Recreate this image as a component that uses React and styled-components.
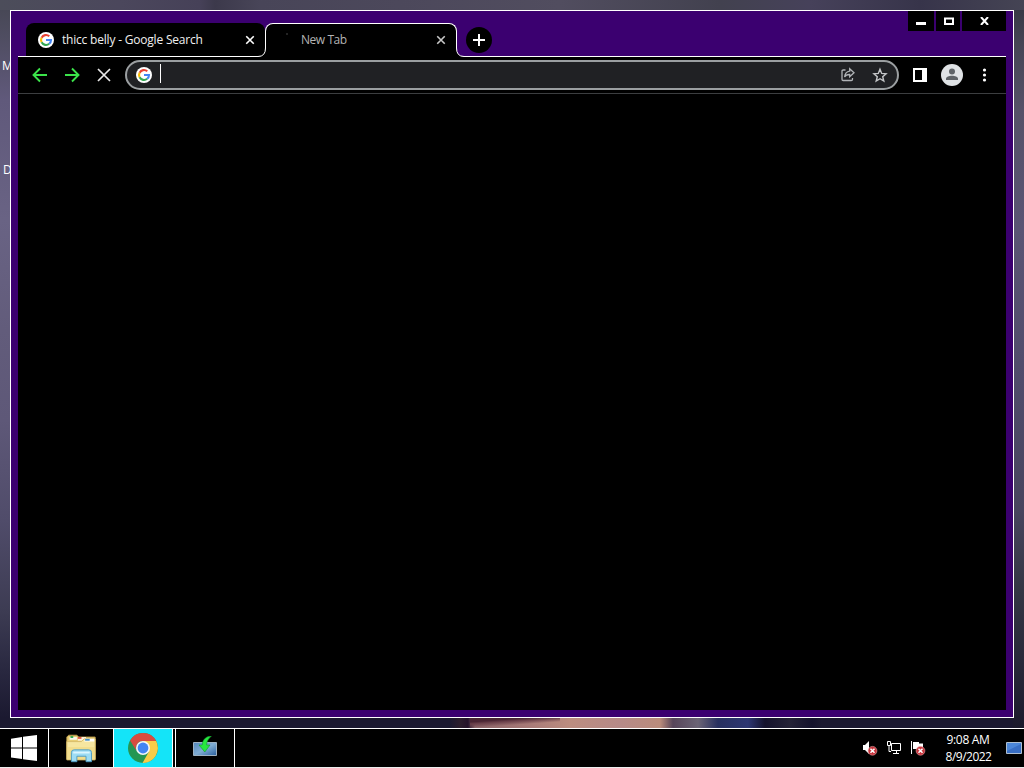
import React from 'react'
import styled, { createGlobalStyle } from 'styled-components'

const GlobalStyle = createGlobalStyle`
  * { box-sizing: border-box; }
  body { margin: 0; background: #000; overflow: hidden; }
  svg { display: block; flex: none; }
`

const white = '#fff'
const purple = '#3b0070'

const Screen = styled.div`
  position: relative;
  width: 1024px;
  height: 768px;
  display: flex;
  flex-direction: column;
  overflow: hidden;
  font-family: 'Open Sans', 'Noto Sans', sans-serif;
  font-size: 12px;
  color: ${white};
`

const Desktop = styled.div`
  height: 728px;
  padding: 10px;
  background:
    linear-gradient(176deg, #4a2634 4px, #6b414b 6px, transparent 10px) 470px 718px / 90px 10px no-repeat,
    linear-gradient(90deg, transparent 450px, #2b1d2c 460px, #24122a 468px, #8a6468 475px, #a87b78 530px, #bc8d80 570px, #b68a88 620px, #ba8c7c 660px, #57455a 673px, #6b6475 698px, #28305f 718px, #2d3672 748px, #14122c 765px, #242236 790px, #14122c 812px, transparent 822px) 0 718px / 1024px 10px no-repeat,
    linear-gradient(90deg, #4c4d5a, #4b475c 120px, #464158 200px, #3c394b 215px, #484558 260px, #4c485b 400px, #514d5f 560px, #42414f 720px, #46415a 810px, #37344a 920px, #454454 1024px) 0 0 / 1024px 10px no-repeat,
    linear-gradient(#454652, #60597b 100px, #696384 220px, #625c7b 330px, #5e5878 420px, #504c6a 520px, #3d3c53 610px, #292840 670px, #1b1930 718px, #1b1a30) 0 0 / 11px 728px no-repeat,
    linear-gradient(#343642, #464555 45px, #555168 110px, #5a5474 230px, #504b6b 380px, #48445e 510px, #343644 590px, #29293a 660px, #1b1a2c 728px) right 0 / 11px 728px no-repeat,
    #1b1930;
`

const DesktopLabel = styled.span`
  position: absolute;
  left: ${({ $x }) => $x}px;
  top: ${({ $y }) => $y}px;
  line-height: 16px;
`

const Window = styled.div`
  position: relative;
  width: 1004px;
  height: 708px;
  padding: 0 7px 7px;
  display: flex;
  flex-direction: column;
  border: 1px solid ${white};
  background: ${purple};
`

const TitleBar = styled.div`
  height: 46px;
  display: flex;
  align-items: flex-end;
  background: linear-gradient(${white}, ${white}) 0 45px / 100% 1px no-repeat;
`

const Tab = styled.div`
  position: relative;
  height: ${({ $active }) => $active ? 34 : 33}px;
  width: ${({ $active }) => $active ? 192 : 239}px;
  margin-left: ${({ $active }) => $active ? 0 : 8}px;
  margin-bottom: ${({ $active }) => $active ? 0 : 1}px;
  padding: ${({ $active }) => $active ? '0 10px 2px 35px' : '0 10px 0 12px'};
  display: flex;
  align-items: center;
  gap: 8px;
  border: ${({ $active }) => $active ? `1px solid ${white}` : 'none'};
  border-bottom: none;
  border-radius: 8px 8px 0 0;
  background: #000;
  color: ${({ $active }) => $active ? '#b4b4b4' : '#f0f0f0'};
`

const TabTitle = styled.span`
  flex: 1;
  white-space: nowrap;
  letter-spacing: ${({ $spacing }) => $spacing || 0}px;
`

const Foot = styled.svg`
  position: absolute;
  bottom: 0;
  ${({ $side }) => $side}: -8px;
`

const Throbber = styled.i`
  position: absolute;
  left: 20px;
  top: 9px;
  width: 2px;
  height: 2px;
  background: #242424;
`

const NewTabButton = styled.button`
  width: 26px;
  height: 26px;
  margin: 0 0 4px 9px;
  padding: 0;
  display: grid;
  place-items: center;
  border: none;
  border-radius: 50%;
  background: #000;
`

const Controls = styled.div`
  height: 20px;
  margin-left: auto;
  align-self: flex-start;
  display: flex;
  gap: 2px;
`

const ControlButton = styled.button`
  width: ${({ $width }) => $width}px;
  height: 20px;
  padding: ${({ $nudge }) => $nudge ? '0 0 0 2px' : 0};
  display: grid;
  place-items: center;
  border: none;
  background: #000;
`

const Toolbar = styled.div`
  height: 37px;
  padding: 0 13px 0 14px;
  display: flex;
  align-items: center;
  border-bottom: 1px solid #3c3e40;
  background: #000;
`

const NavIcons = styled.div`
  width: 93px;
  display: flex;
  gap: 16px;
`

const AddressBar = styled.div`
  width: 774px;
  height: 30px;
  padding: 0 9px;
  display: flex;
  align-items: center;
  border: 2px solid #9b9fa1;
  border-radius: 15px;
  background: #202124;
`

const Caret = styled.i`
  width: 1px;
  height: 19px;
  margin: -3px auto 0 8px;
  background: ${white};
`

const BarActions = styled.div`
  display: flex;
  gap: 16px;
`

const BrowserActions = styled.div`
  margin-left: 13px;
  display: flex;
  align-items: center;
`

const Avatar = styled.div`
  margin: 0 15px 0 13px;
`

const Page = styled.div`
  flex: 1;
  background: #000;
`

const Taskbar = styled.div`
  height: 40px;
  display: flex;
  border-top: 1px solid ${white};
  border-bottom: 1px solid #ececec;
  background: #000;
`

const TaskButton = styled.div`
  width: ${({ $width }) => $width}px;
  display: grid;
  place-items: center;
  border-right: 1px solid ${white};
  background: ${({ $active }) => $active ? '#14e4f8' : '#000'};
`

const Tray = styled.div`
  margin-left: auto;
  display: flex;
  align-items: center;
`

const TrayIcons = styled.div`
  display: flex;
  gap: 8px;
`

const Clock = styled.div`
  width: 60px;
  margin: 0 8px 0 12px;
  text-align: center;
  line-height: 17px;
  letter-spacing: -0.3px;
`

const ClockDate = styled.div`
  padding-left: 1px;
  letter-spacing: -0.5px;
`

const GoogleIcon = () => (
  <svg width="16" height="16" viewBox="0 0 16 16" fill="none" strokeWidth="2.1">
    <circle cx="8" cy="8" r="8" fill="#fff" />
    <path d="M11.3 4.3A5 5 0 0 0 3.6 5.7" stroke="#ea4335" />
    <path d="M3.6 5.7a5 5 0 0 0 0 4.6" stroke="#fbbc05" />
    <path d="M3.6 10.3a5 5 0 0 0 7.6 1.5" stroke="#34a853" />
    <path d="M8 8h5A5 5 0 0 1 11.2 11.8" stroke="#4285f4" />
  </svg>
)

const Cross = ({ size, color, width = 1.6 }) => (
  <svg width={size} height={size} viewBox="0 0 16 16">
    <path d="M2 2l12 12M14 2L2 14" stroke={color} strokeWidth={width * 16 / size} />
  </svg>
)

const Arrow = ({ flip }) => (
  <svg width="16" height="16" viewBox="0 0 16 16" transform={flip ? 'scale(-1 1)' : undefined}>
    <path d="M15 8H2M8 1.5L1.5 8 8 14.5" fill="none" stroke="#3be34a" strokeWidth="1.9" />
  </svg>
)

const TabFoot = ({ side }) => (
  <Foot $side={side} width="8" height="9" viewBox="0 0 8 9">
    {side === 'left'
      ? <><path d="M8 0v9H0V8.5Q7.5 8.5 7.5 0z" fill="#000" /><path d="M0 8.5Q7.5 8.5 7.5 0" fill="none" stroke="#fff" /></>
      : <><path d="M0 0v9h8V8.5Q.5 8.5.5 0z" fill="#000" /><path d="M8 8.5Q.5 8.5.5 0" fill="none" stroke="#fff" /></>}
  </Foot>
)

const ErrorBadge = ({ x, y }) => (
  <g transform={`translate(${x} ${y})`}>
    <circle r="4.4" fill="#c8343c" stroke="#e9a0a2" strokeWidth=".6" />
    <path d="M-2-2l4 4M2-2l-4 4" stroke="#fff" strokeWidth="1.5" />
  </g>
)

const ShareIcon = () => (
  <svg width="16" height="16" viewBox="0 0 16 16" fill="none" stroke="#b0b3b6" strokeWidth="1.3">
    <path d="M5.5 3H3.2Q2 3 2 4.2v8.1q0 1.2 1.2 1.2h8.1q1.2 0 1.2-1.2V11" />
    <path d="M9.7 1.8L14 5.8 9.7 9.7V7.5C7 7.4 5.6 8.3 4.6 10c.3-3.4 1.9-5.5 5.1-5.9z" />
  </svg>
)

const StarIcon = () => (
  <svg width="16" height="16" viewBox="0 0 16 16">
    <path d="M8 2.2l1.7 4.2 4.4.4-3.4 2.9 1.1 4.3L8 11.7 4.2 14l1.1-4.3-3.4-2.9 4.4-.4z" fill="none" stroke="#c4c6c8" strokeWidth="1.4" />
  </svg>
)

const WindowsLogo = () => (
  <svg width="26" height="26" viewBox="0 0 26 26" fill="#fff">
    <path d="M0 3.7L11 2v10.5H0zM12 1.8L26 0v12.5H12zM0 13.5h11V24L0 22.4zM12 13.5h14V26l-14-1.8z" />
  </svg>
)

const FolderIcon = () => (
  <svg width="34" height="32" viewBox="-1.5 -1.5 36 35">
    <path d="M1 4l2-2h9l2 2h18v24H1z" fill="#e9ce73" stroke="#b89849" />
    <path d="M4 4h8v3H4z" fill="#f7f7ee" /><path d="M5 3h3v2H5z" fill="#27a64b" />
    <path d="M13 4h9v4h-9z" fill="#fff4dc" /><path d="M13 4h4v2h-4z" fill="#de5544" />
    <path d="M1 9h16l3-3h12v23H1z" fill="#f6e6a0" stroke="#d6bb67" />
    <path d="M21 6h10v3H20z" fill="#fff" /><path d="M21 6h5v2h-5z" fill="#408cc5" />
    <path d="M2 15h29v13H2z" fill="#f0d981" opacity=".65" />
    <path d="M6 31V21q0-3 3-3h16q3 0 3 3v10h-6v-6H12v6z" fill="#9ddcf4" stroke="#4b9ac2" />
    <path d="M8 21h18" stroke="#dcf6ff" strokeWidth="2" />
  </svg>
)

const ChromeIcon = () => (
  <svg width="30" height="30" viewBox="0 0 30 30">
    <circle cx="15" cy="15" r="15" fill="#249653" />
    <path d="M15 8h13.2A15 15 0 0 1 14.5 30L21 18.5z" fill="#f8cc48" />
    <path d="M2.1 7.4A15 15 0 0 1 28.2 8H15a7 7 0 0 0-6.1 10.5z" fill="#d84c3f" />
    <circle cx="15" cy="15" r="7" fill="#f4f6f8" />
    <circle cx="15" cy="15" r="5.4" fill="#4285f4" />
  </svg>
)

const InstallIcon = () => (
  <svg width="24" height="24" viewBox="0 0 24 24">
    <defs><linearGradient id="panel" x2="1" y2="1"><stop stopColor="#5286bd" /><stop offset=".5" stopColor="#80add3" /><stop offset="1" stopColor="#285e9d" /></linearGradient></defs>
    <path d="M.5 6.5h23v13H.5z" fill="url(#panel)" stroke="#9eb2c2" />
    <path d="M18.5 0C14 0 9.5 3 9.2 9H6l5.8 7L17 9h-3.4c.1-4 1.8-6.5 4.9-9z" fill="#27e83f" stroke="#13962a" strokeWidth=".6" />
  </svg>
)

const App = () => {
  return (
    <>
      <GlobalStyle />
      <Screen>
        <Desktop>
          <DesktopLabel $x={2} $y={58}>M</DesktopLabel>
          <DesktopLabel $x={3} $y={162}>D</DesktopLabel>
          <Window>
            <TitleBar>
              <Tab>
                <GoogleIcon />
                <TabTitle $spacing={-0.2}>thicc belly - Google Search</TabTitle>
                <Cross size={10} color="#fff" />
              </Tab>
              <Tab $active>
                <Throbber />
                <TabFoot side="left" />
                <TabFoot side="right" />
                <TabTitle $spacing={-0.45}>New Tab</TabTitle>
                <Cross size={10} color="#c8c8c8" />
              </Tab>
              <NewTabButton>
                <svg width="12" height="12"><path d="M6 0v12M0 6h12" stroke="#fff" strokeWidth="2" /></svg>
              </NewTabButton>
              <Controls>
                <ControlButton $width={26}>
                  <svg width="10" height="10"><path d="M0 6h10v3H0z" fill="#fff" /></svg>
                </ControlButton>
                <ControlButton $width={24} $nudge>
                  <svg width="10" height="8"><path d="M1 1.5h8v5.5H1z" fill="none" stroke="#fff" strokeWidth="2" /></svg>
                </ControlButton>
                <ControlButton $width={44}>
                  <svg width="9" height="8"><path d="M1 0l7 8M8 0L1 8" stroke="#fff" strokeWidth="2" /></svg>
                </ControlButton>
              </Controls>
            </TitleBar>
            <Toolbar>
              <NavIcons>
                <Arrow />
                <Arrow flip />
                <Cross size={16} color="#e8e8e8" width={1.7} />
              </NavIcons>
              <AddressBar>
                <GoogleIcon />
                <Caret />
                <BarActions>
                  <ShareIcon />
                  <StarIcon />
                </BarActions>
              </AddressBar>
              <BrowserActions>
                <svg width="16" height="16"><path d="M1 1h14v14H1z" fill="#fff" /><path d="M3 3h7v10H3z" /></svg>
                <Avatar>
                  <svg width="22" height="22"><circle cx="11" cy="11" r="11" fill="#dfe2e5" /><circle cx="11" cy="7.6" r="3" fill="#5f6368" /><path d="M5 16v-1.3c0-4 12-4 12 0V16z" fill="#5f6368" /></svg>
                </Avatar>
                <svg width="12" height="16" fill="#fff"><circle cx="6.5" cy="3" r="1.6" /><circle cx="6.5" cy="8" r="1.6" /><circle cx="6.5" cy="13" r="1.6" /></svg>
              </BrowserActions>
            </Toolbar>
            <Page />
          </Window>
        </Desktop>
        <Taskbar>
          <TaskButton $width={49}><WindowsLogo /></TaskButton>
          <TaskButton $width={65}><FolderIcon /></TaskButton>
          <TaskButton $width={59} $active><ChromeIcon /></TaskButton>
          <TaskButton $width={3} />
          <TaskButton $width={59}><InstallIcon /></TaskButton>
          <Tray>
            <TrayIcons>
              <svg width="16" height="16"><path d="M1 5h2l4-4v13l-4-4H1z" fill="#fff" /><ErrorBadge x={10.5} y={10.8} /></svg>
              <svg width="16" height="16" fill="none" stroke="#fff"><path d="M5.5 3.5h9v7h-9zM7 13.5h6M10.5 11v2M1.5 1.5h3v4h-3zM3 6v5.5h2" /></svg>
              <svg width="16" height="16"><path d="M1.5 1v13" stroke="#fff" /><path d="M3 2h6v1.5h4V9H3z" fill="#fff" /><ErrorBadge x={10.5} y={10.8} /></svg>
            </TrayIcons>
            <Clock>
              9:08 AM
              <ClockDate>8/9/2022</ClockDate>
            </Clock>
            <svg width="18" height="12"><path d="M.5.5h15v11H.5z" fill="#4b86d8" stroke="#aebfd0" /><path d="M1 9L15 2v9H1z" fill="#2b5fb8" opacity=".6" /></svg>
          </Tray>
        </Taskbar>
      </Screen>
    </>
  )
}

export default App
